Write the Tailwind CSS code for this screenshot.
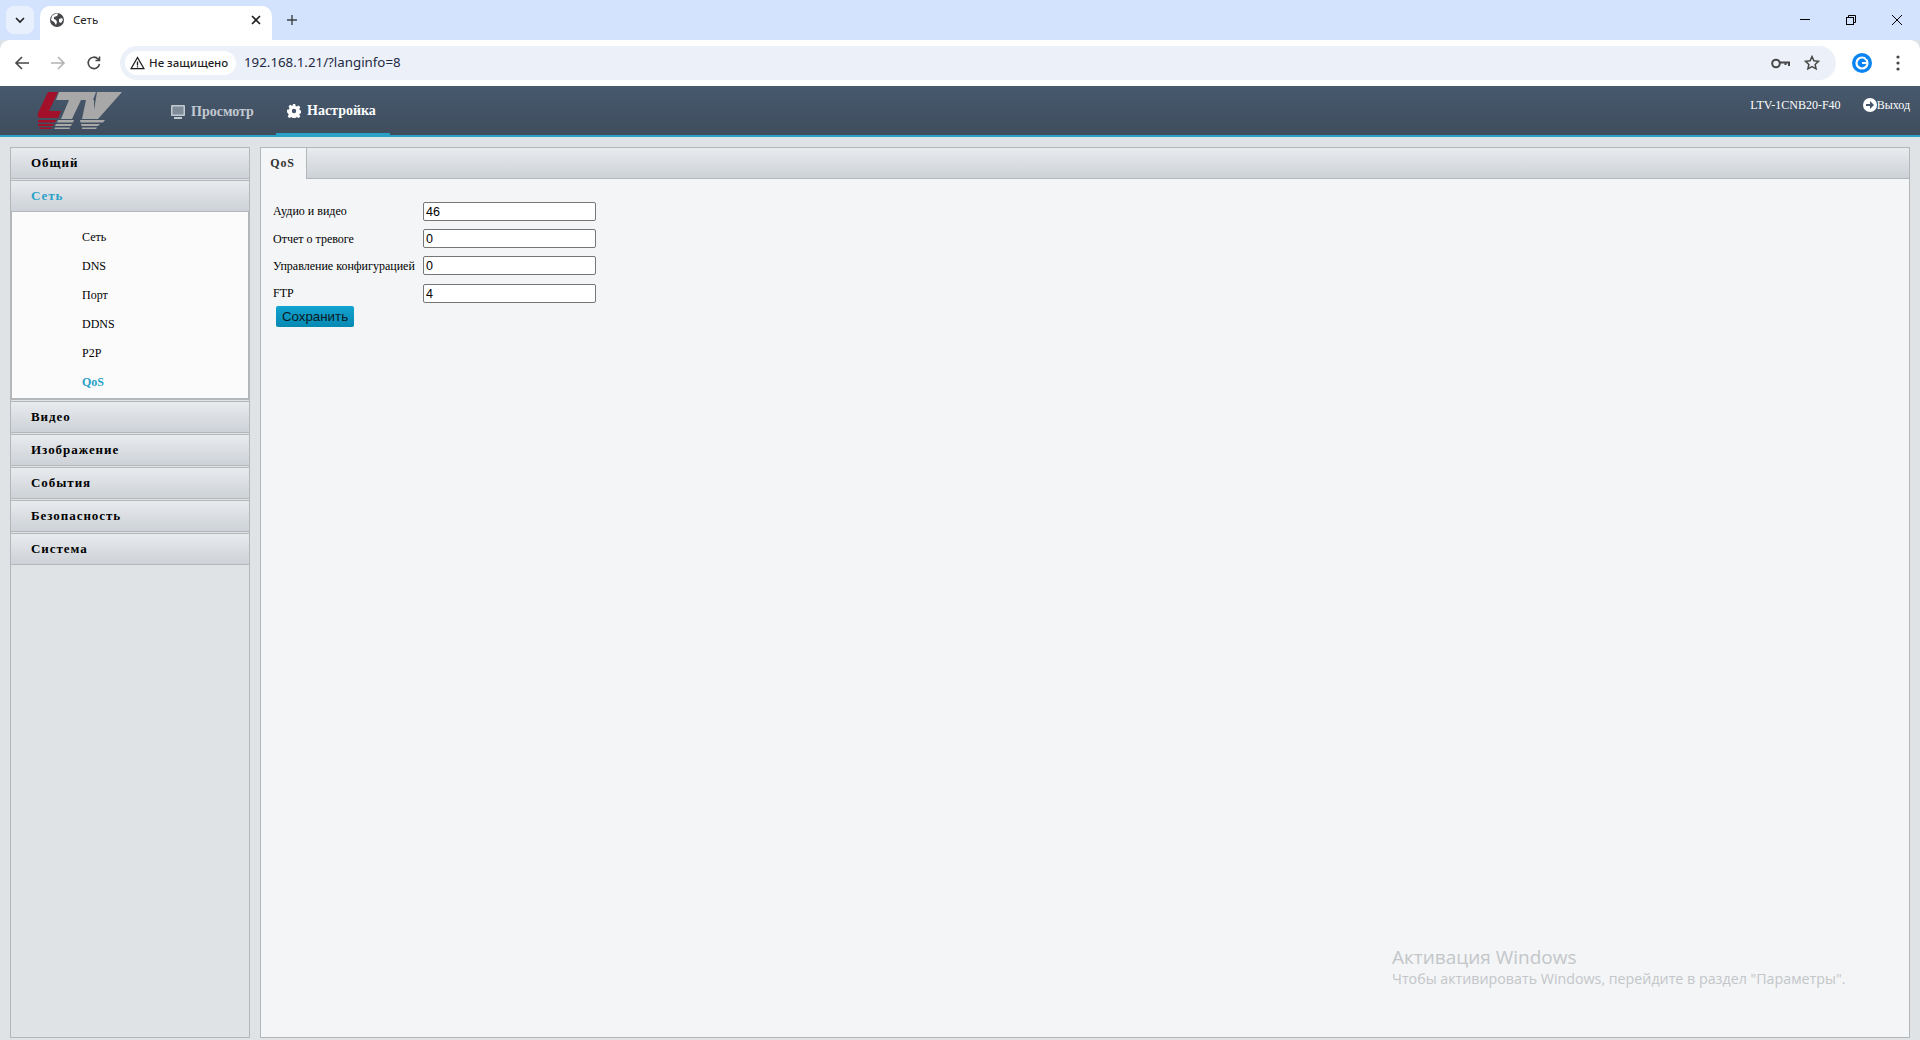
<!DOCTYPE html>
<html lang="ru">
<head>
<meta charset="utf-8">
<title>Сеть</title>
<script src="https://cdn.jsdelivr.net/npm/@tailwindcss/browser@4"></script>
</head>
<body class="m-0 overflow-hidden">
<div class="relative w-[1920px] h-[1040px] flex flex-col bg-[#dfe3e6] font-['Liberation_Serif',serif] text-black">

  <!-- tab strip -->
  <div class="h-[40px] shrink-0 bg-[#d3e3fd] flex items-end pl-[6px] font-['Noto_Sans',sans-serif]">
    <div class="self-start mt-[6px] w-[28px] h-[28px] rounded-[8px] bg-[#e8f0fe] flex items-center justify-center">
      <svg width="12" height="12" viewBox="0 0 12 12" fill="none" stroke="#1f1f1f" stroke-width="1.6"><path d="M2 4l4 4 4-4"/></svg>
    </div>
    <div class="ml-[6px] w-[232px] h-[34px] bg-white rounded-t-[10px] flex items-center pl-[9px] pr-[10px] pb-[6px]">
      <svg width="16" height="16" viewBox="0 0 16 16"><circle cx="8" cy="8" r="7" fill="#45474a"/><path d="M3 4c2-2 5-3 6-2l-1 2-3 1 0 2 2 1 1 2-1 3-2-3-3-2z M10 7l3-1 1 2-2 3-2-1z" fill="#fff"/></svg>
      <span class="ml-[8px] text-[11.500px] leading-none text-[#1f1f1f]">Сеть</span>
      <svg class="ml-auto" width="12" height="12" viewBox="0 0 12 12" stroke="#1f1f1f" stroke-width="1.6"><path d="M2 2l8 8M10 2l-8 8"/></svg>
    </div>
    <svg class="self-start mt-[14px] ml-[14px]" width="12" height="12" viewBox="0 0 12 12" stroke="#3c4043" stroke-width="1.4"><path d="M6 1v10M1 6h10"/></svg>
    <div class="ml-auto self-start flex items-center h-[40px]">
      <div class="w-[46px] flex justify-center"><svg width="12" height="12" viewBox="0 0 12 12" stroke="#000" stroke-width="1"><path d="M1 5.500h10"/></svg></div>
      <div class="w-[46px] flex justify-center"><svg width="12" height="12" viewBox="0 0 12 12" fill="none" stroke="#000" stroke-width="1"><rect x="1.500" y="3.500" width="7" height="7"/><path d="M3.500 3.500v-2h7v7h-2"/></svg></div>
      <div class="w-[46px] flex justify-center"><svg width="12" height="12" viewBox="0 0 12 12" stroke="#000" stroke-width="1"><path d="M1 1l10 10M11 1L1 11"/></svg></div>
    </div>
  </div>

  <!-- toolbar -->
  <div class="h-[46px] shrink-0 bg-white rounded-t-[10px] flex items-center pl-[14px] border-b border-[#c9cccf] font-['Noto_Sans',sans-serif] box-content -mb-px">
    <svg width="16" height="16" viewBox="0 0 16 16" fill="none" stroke="#474747" stroke-width="1.6"><path d="M15 8H2M8 2L2 8l6 6"/></svg>
    <svg class="ml-[20px]" width="16" height="16" viewBox="0 0 16 16" fill="none" stroke="#b3b3b3" stroke-width="1.6"><path d="M1 8h13M8 2l6 6-6 6"/></svg>
    <svg class="ml-[20px]" width="16" height="16" viewBox="0 0 16 16" fill="none" stroke="#474747" stroke-width="1.6"><path d="M13.500 9a5.700 5.700 0 1 1-1.400-5l1.400 1.500M13.500 1.500v4h-4"/></svg>
    <div class="ml-[18px] w-[1716px] h-[34px] rounded-full bg-[#ebf0f9] flex items-center pl-[5px] pr-[16px]">
      <div class="h-[24px] w-[111px] rounded-full bg-white flex items-center pl-[5px]">
        <svg width="15" height="14" viewBox="0 0 15 14" fill="none" stroke="#1f1f1f" stroke-width="1.3"><path d="M7.500 1.500L1 12.700h13zM7.500 5.500v4M7.500 10.200v1.200"/></svg>
        <span class="ml-[4px] text-[11.500px] font-medium leading-none text-[#1f1f1f] whitespace-nowrap">Не защищено</span>
      </div>
      <span class="ml-[8px] text-[13.300px] leading-none text-[#1f2a44]">192.168.1.21/?langinfo=8</span>
      <svg class="ml-auto" width="19" height="13" viewBox="0 0 19 13" fill="none" stroke="#474747" stroke-width="2"><circle cx="5" cy="6.500" r="3.800"/><path d="M9 5.500h9v3.500M14.500 5.500v2.500"/></svg>
      <svg class="ml-[14px]" width="16" height="16" viewBox="0 0 16 16" fill="none" stroke="#474747" stroke-width="1.500"><path d="M8 1.600l1.900 4.200 4.600.5-3.400 3.100 1 4.500L8 11.600l-4.100 2.300 1-4.500L1.500 6.300l4.600-.5z"/></svg>
    </div>
    <svg class="ml-[16px]" width="20" height="20" viewBox="0 0 20 20"><circle cx="10" cy="10" r="10" fill="#0b84f3"/><circle cx="10" cy="10" r="5.500" fill="none" stroke="#fff" stroke-width="2.200"/><path d="M10 9h6v2h-6z" fill="#fff"/><path d="M14 3l3 3-3 0z" fill="#0b84f3"/></svg>
    <svg class="ml-[24px]" width="4" height="16" viewBox="0 0 4 16" fill="#474747"><circle cx="2" cy="2" r="1.600"/><circle cx="2" cy="8" r="1.600"/><circle cx="2" cy="14" r="1.600"/></svg>
  </div>

  <!-- app header -->
  <div class="h-[51px] shrink-0 border-b-2 border-[#29a1c6] bg-gradient-to-b from-[#47596e] to-[#3f4d5d] flex text-white">
    <svg class="ml-[37px] mt-[5px]" width="86" height="40" viewBox="0 0 86 40">
      <path d="M11 1H21L12 20H24L21 27H4C1 27 0 25 1 22z" fill="#a31029"/>
      <path d="M1 29h18l-1 2.500H1zM1 33h16l-1 2H1zM2 36.500h13l-1 1.500H3z" fill="#a31029"/>
      <path d="M22 1H59L56 9H44L35 28H24L32 9H19z" fill="#a8a8a8"/>
      <path d="M60 1H85L61 28H45L49 9H57L57 19z" fill="#a8a8a8"/>
      <path d="M21 29h16l-1 2.500H20zM43 29h25l-2 2.500H43.500zM19 33h16l-1 2H18zM44 33h19l-2 2H44.500zM18 36.500h15l-.5 1.500H17.500zM45 36.500h15l-1 1.500H45z" fill="#a8a8a8"/>
    </svg>
    <div class="ml-[48px] w-[105px] pt-[2px] flex items-center font-bold text-[14px] text-[#c2c9d1]">
      <svg class="mr-[6px] mt-[1px]" width="14" height="14" viewBox="0 0 14 14"><rect x="0" y="0" width="14" height="11" rx="1" fill="#c2c9d1"/><rect x="1.500" y="1.500" width="11" height="8" fill="#7f8b98"/><rect x="3" y="12" width="8" height="2" fill="#c2c9d1"/></svg>
      Просмотр
    </div>
    <div class="w-[114px] h-[49px] pt-[2px] border-b-2 border-[#29a1c6] flex items-center pl-[11px] font-bold text-[14px] text-white">
      <svg class="mr-[6px] mt-[1px]" width="14" height="14" viewBox="0 0 14 14"><path d="M5.800 0h2.400l.4 1.900 1.300.6 1.700-1 1.700 1.700-1 1.700.6 1.300 1.900.4v2.400l-1.900.4-.6 1.300 1 1.700-1.700 1.700-1.700-1-1.300.6-.4 1.900H5.800l-.4-1.900-1.300-.6-1.700 1-1.700-1.700 1-1.700-.6-1.300L0 8.200V5.800l1.900-.4.6-1.300-1-1.700 1.700-1.700 1.700 1 1.300-.6z" fill="#fff"/><circle cx="7" cy="7" r="2.200" fill="#44546a"/></svg>
      Настройка
    </div>
    <div class="ml-auto flex items-center h-[37px] text-[12px] text-white pr-[10px]">
      <span>LTV-1CNB20-F40</span>
      <svg class="ml-[22px]" width="14" height="14" viewBox="0 0 14 14"><circle cx="7" cy="7" r="7" fill="#fff"/><path d="M3 6h4V3l4 4-4 4V8H3z" fill="#44546a"/></svg>
      <span>Выход</span>
    </div>
  </div>

  <!-- body -->
  <div class="flex-1 min-h-0 flex pt-[10px] pb-[2px] pl-[10px] pr-[10px] gap-[10px]">
    <!-- sidebar -->
    <div class="w-[240px] shrink-0 border-x border-b border-[#b3b7ba] flex flex-col gap-px">
      <div class="h-[32px] border border-[#b3b7ba] -mx-px bg-gradient-to-b from-[#e8ebee] to-[#cdd2d8] pl-[20px] flex items-center font-bold text-[13px] tracking-[0.95px]">Общий</div>
      <div class="-mx-px">
        <div class="h-[32px] border border-[#b3b7ba] bg-gradient-to-b from-[#e8ebee] to-[#cdd2d8] pl-[20px] flex items-center font-bold text-[13px] tracking-[0.95px] text-[#29a1c6]">Сеть</div>
        <div class="h-[188px] border-x-2 border-b-2 border-[#b3b7ba] bg-[#fbfbfb] pt-[10px] pl-[70px] text-[12px]">
          <div class="h-[29px] flex items-center">Сеть</div>
          <div class="h-[29px] flex items-center">DNS</div>
          <div class="h-[29px] flex items-center">Порт</div>
          <div class="h-[29px] flex items-center">DDNS</div>
          <div class="h-[29px] flex items-center">P2P</div>
          <div class="h-[29px] flex items-center font-bold text-[#29a1c6]">QoS</div>
        </div>
      </div>
      <div class="h-[32px] border border-[#b3b7ba] -mx-px bg-gradient-to-b from-[#e8ebee] to-[#cdd2d8] pl-[20px] flex items-center font-bold text-[13px] tracking-[0.95px]">Видео</div>
      <div class="h-[32px] border border-[#b3b7ba] -mx-px bg-gradient-to-b from-[#e8ebee] to-[#cdd2d8] pl-[20px] flex items-center font-bold text-[13px] tracking-[0.95px]">Изображение</div>
      <div class="h-[32px] border border-[#b3b7ba] -mx-px bg-gradient-to-b from-[#e8ebee] to-[#cdd2d8] pl-[20px] flex items-center font-bold text-[13px] tracking-[0.95px]">События</div>
      <div class="h-[32px] border border-[#b3b7ba] -mx-px bg-gradient-to-b from-[#e8ebee] to-[#cdd2d8] pl-[20px] flex items-center font-bold text-[13px] tracking-[0.95px]">Безопасность</div>
      <div class="h-[32px] border border-[#b3b7ba] -mx-px bg-gradient-to-b from-[#e8ebee] to-[#cdd2d8] pl-[20px] flex items-center font-bold text-[13px] tracking-[0.95px]">Система</div>
    </div>

    <!-- content -->
    <div class="flex-1 min-w-0 border border-[#b3b7ba] bg-[#f3f5f7] flex flex-col">
      <div class="h-[31px] shrink-0 border-b border-[#b3b7ba] bg-gradient-to-b from-[#e8ebee] to-[#cdd2d8] flex">
        <div class="w-[46px] h-[31px] bg-[#f3f5f7] border-r border-[#b3b7ba] flex items-center justify-center font-bold text-[12px] tracking-[0.8px] text-[#333] pb-[2px] pr-[2px]">QoS</div>
      </div>
      <div class="pl-[12px] pt-[23px] text-[12px]">
        <div class="h-[27px] flex items-start"><span class="w-[150px]">Аудио и видео</span><input class="w-[173px] h-[19px] bg-white border border-[#767676] rounded-[2px] px-[2px] font-['Liberation_Sans',sans-serif] text-[12.500px] leading-none" value="46"></div>
        <div class="h-[27px] flex items-start"><span class="w-[150px] pt-[1px]">Отчет о тревоге</span><input class="w-[173px] h-[19px] bg-white border border-[#767676] rounded-[2px] px-[2px] font-['Liberation_Sans',sans-serif] text-[12.500px] leading-none" value="0"></div>
        <div class="h-[28px] flex items-start"><span class="w-[150px] pt-[1px] whitespace-nowrap">Управление конфигурацией</span><input class="w-[173px] h-[19px] bg-white border border-[#767676] rounded-[2px] px-[2px] font-['Liberation_Sans',sans-serif] text-[12.500px] leading-none" value="0"></div>
        <div class="h-[22px] flex items-start"><span class="w-[150px]">FTP</span><input class="w-[173px] h-[19px] bg-white border border-[#767676] rounded-[2px] px-[2px] font-['Liberation_Sans',sans-serif] text-[12.500px] leading-none" value="4"></div>
        <button class="ml-[3px] block w-[78px] h-[21px] rounded-[2px] bg-gradient-to-b from-[#12a3d0] to-[#0689b2] text-[13.330px] leading-none font-['Liberation_Sans',sans-serif] text-[#0a1a24]">Сохранить</button>
      </div>
    </div>
  </div>

  <!-- Windows watermark -->
  <div class="absolute left-[1392px] top-[944px] font-['Open_Sans',sans-serif] text-[#c3c6c9] whitespace-nowrap">
    <div class="text-[19px] leading-[26px]">Активация Windows</div>
    <div class="text-[14.250px] leading-[18px]">Чтобы активировать Windows, перейдите в раздел "Параметры".</div>
  </div>
</div>
</body>
</html>
